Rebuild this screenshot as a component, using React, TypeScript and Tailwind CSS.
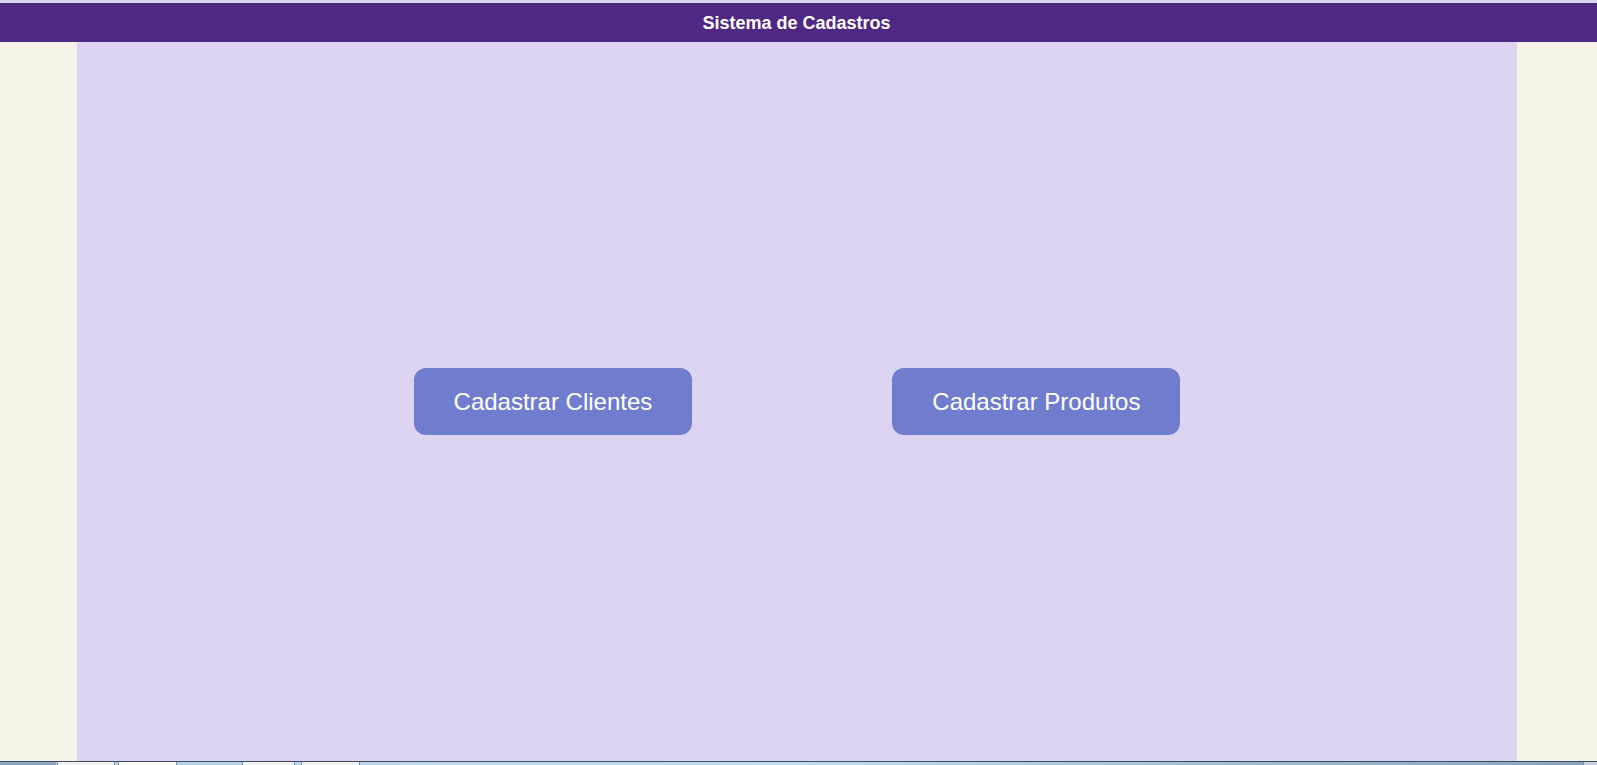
import React from "react";

export default function App() {
  return (
    <div className="w-[1597px] h-[765px] flex flex-col bg-[#dcd4f2] overflow-hidden" style={{ fontFamily: '"Liberation Sans", Arial, sans-serif' }}>
      <div className="h-[3px] bg-[#dcd4f2]" />
      <header className="h-[39px] bg-[#4e2882] flex items-center justify-center pr-[4px]">
        <h1 className="text-white font-bold text-[18px] leading-none">Sistema de Cadastros</h1>
      </header>
      <div className="flex-1 flex bg-[#f5f3e7]">
        <div className="w-[77px]" />
        <main className="w-[1440px] bg-[#ddd4f3] flex items-center justify-center gap-[200px] pb-[1px]">
          <button className="bg-[#707dce] text-white text-[24px] leading-[27px] px-[40px] py-[20px] rounded-[12px]">
            Cadastrar Clientes
          </button>
          <button className="bg-[#707dce] text-white text-[24px] leading-[27px] px-[40px] py-[20px] rounded-[12px]">
            Cadastrar Produtos
          </button>
        </main>
        <div className="flex-1" />
      </div>
      <div className="h-[4px] flex border-t border-[#3e4a5e] bg-gradient-to-r from-[#b8d3ea] via-[#c4dcef] to-[#8aa2bc]">
        <div className="w-[56px] bg-[#8ea6c0]" />
        <div className="w-[58px] ml-[1px] bg-[#eef3f8] border-x border-[#7d8ea3]" />
        <div className="w-[59px] ml-[3px] bg-white border-x border-[#7d8ea3]" />
        <div className="w-[64px] bg-[#b9d2e8]" />
        <div className="w-[53px] ml-[1px] bg-[#eef3f8] border-x border-[#7d8ea3]" />
        <div className="w-[59px] ml-[6px] bg-[#eef3f8] border-x border-[#7d8ea3]" />
        <div className="flex-1" />
        <div className="w-[14px] bg-[#c9d3de] border-l border-[#7d8ea3]" />
      </div>
    </div>
  );
}
